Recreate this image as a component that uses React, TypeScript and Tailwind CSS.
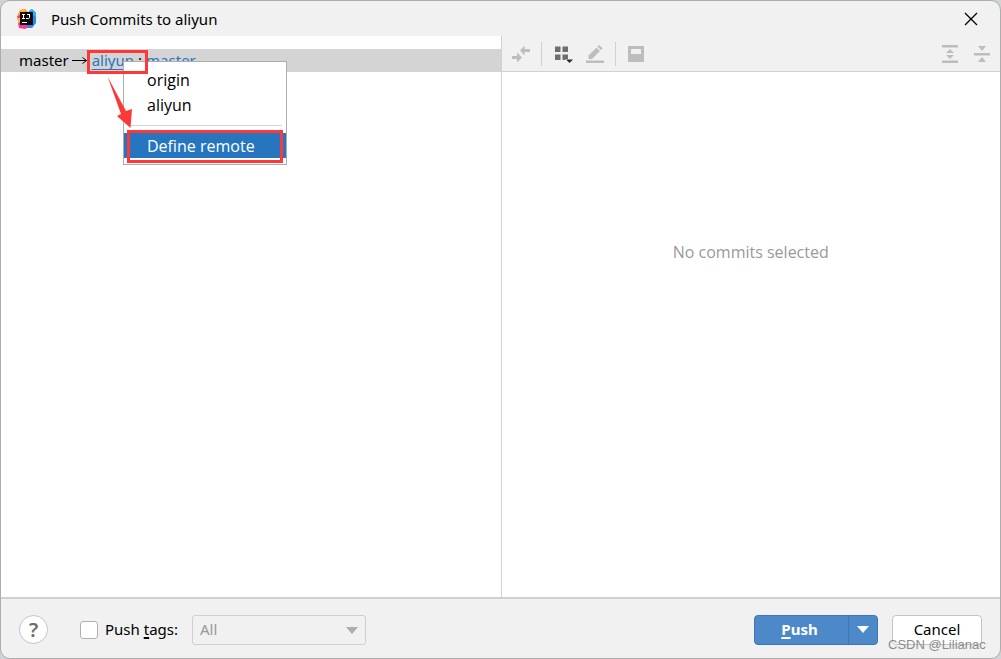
import React, { useState } from 'react';

const menuItemClass =
  'block h-[25px] w-full pl-[23px] text-left leading-[27px] whitespace-nowrap';

const AppLogo = () => (
  <svg width="20" height="20" viewBox="0 0 20 20" aria-hidden="true">
    <path d="M1 5 3 1l5-1 3 3-3 4-6 2z" fill="#ff8a3c" />
    <path d="M2 2 6 0l3 1-3 4-4 1z" fill="#fdb32a" />
    <path d="M0 7l5-2 1 6-5 1z" fill="#fb3f7c" />
    <path d="M1 9l4 0 1 4-5 0z" fill="#fdbd2c" />
    <path d="M12 2l3-2 4 4 0 10-4 5-5-2z" fill="#1f8fee" />
    <path d="M13 1l2-1 4 4 0 4-5-3z" fill="#22b7f2" />
    <path d="M1 14l4-2 6 5 1 1-4 2-6-1z" fill="#f93a8b" />
    <path d="M9 15l7 0-2 4-4 0z" fill="#5a6fe8" />
    <rect x="3" y="3" width="13" height="13" fill="#120a0d" />
    <path d="M5 5.500h3M6.500 5.500v4M5 9.500h3M10 5.500h3M12.500 5v3.500q0 1-1 1H9" stroke="#fff" fill="none" />
    <path d="M5 13.500h5" stroke="#fff" />
  </svg>
);

const CollapseArrowsIcon = () => (
  <svg width="18" height="18" viewBox="0 0 18 18" fill="#bdbdbd" aria-hidden="true">
    <path d="M8 5.500 12.500 .5v3.500H18v3h-5.500v3.500zM0 11h5V7.500l5 5-5 5V14H0z" />
  </svg>
);

const GroupIcon = () => (
  <svg width="20" height="19" viewBox="0 0 20 19" aria-hidden="true">
    <path d="M1 2.500h5.500v5.500H1zM8.500 2.500h5.500v5.500H8.500zM1 10.500h5.500v5.500H1zM8.500 10.500h5.500v5.500H8.500z" fill="#6e6e6e" />
    <path d="M11 15h9l-4.500 4z" fill="#f1f1f1" />
    <path d="M12 15.500h7l-3.500 3.500z" fill="#2b2b2b" />
  </svg>
);

const PencilIcon = () => (
  <svg width="18" height="18" viewBox="0 0 18 18" fill="#bdbdbd" aria-hidden="true">
    <path d="M2.500 14v-3.500L10.500 2.500l3.500 3.500L6 14zM11.500 1.500l1-1q.6-.6 1.200 0l2.300 2.300q.6.6 0 1.200l-1 1zM0 15.500h18V18H0z" />
  </svg>
);

const PreviewIcon = () => (
  <svg width="16" height="16" viewBox="0 0 16 16" aria-hidden="true">
    <rect width="16" height="16" fill="#bdbdbd" />
    <rect x="3" y="3" width="10" height="5" fill="#f1f1f1" />
  </svg>
);

const ExpandAllIcon = () => (
  <svg width="16" height="18" viewBox="0 0 16 18" fill="#bdbdbd" aria-hidden="true">
    <path d="M0 0h16v2.500H0zM0 15.500h16V18H0zM8 4l4 4H4zM4 10h8l-4 4z" />
  </svg>
);

const CollapseAllIcon = () => (
  <svg width="16" height="16" viewBox="0 0 16 16" fill="#bdbdbd" aria-hidden="true">
    <path d="M0 7h16v2.500H0zM4 0h8L8 5zM8 11l4 5H4z" />
  </svg>
);

const Annotations = () => (
  <svg
    className="pointer-events-none absolute top-[13px] left-[85px] z-20"
    width="200"
    height="116"
    viewBox="86 49 200 116"
    fill="none"
    aria-hidden="true"
  >
    <rect x="88.500" y="51.500" width="58" height="21" stroke="#fd3838" strokeWidth="3" />
    <rect x="128.500" y="131.500" width="153" height="30" stroke="#fd3838" strokeWidth="3" />
    <path d="M107.500 76.500 126 111l6-2-1.500 19L117 116l4-2z" fill="#fd3838" />
  </svg>
);

const App = () => {
  const [pushTags, setPushTags] = useState(false);

  return (
    <div className="min-h-screen bg-[#cfd3d6] font-['Noto_Sans','Open_Sans',sans-serif] text-[15px] text-black">
      <div className="flex min-h-screen flex-col overflow-hidden rounded-[10px] border border-[#adadad] bg-[#f1f1f1]">
        <header className="flex h-[35px] items-center pr-[22px] pl-4">
          <AppLogo />
          <h1 className="ml-[14px] flex-1 leading-5">Push Commits to aliyun</h1>
          <button type="button" aria-label="Close">
            <svg width="14" height="14" viewBox="0 0 14 14" stroke="#000" strokeWidth="1.300">
              <path d="M1 1l12 12M13 1 1 13" />
            </svg>
          </button>
        </header>

        <main className="flex flex-1 bg-white">
          <section className="relative w-1/2 pt-[13px]">
            <div className="flex h-[23px] items-center bg-[#d4d4d4] pl-[18px] whitespace-nowrap">
              <span>master</span>
              <svg className="mr-1 ml-[3px]" width="16" height="9" viewBox="0 0 16 9" fill="none" stroke="#000">
                <path d="M0 4.500h14M10.500 1.500l4 3-4 3" />
              </svg>
              <a href="#remote" className="text-[#2675bf] underline underline-offset-[3px]">
                aliyun
              </a>
              <span className="px-1">:</span>
              <a href="#branch" className="text-[#2675bf]">
                master
              </a>
            </div>

            <div className="absolute top-[25px] left-[122px] z-10 w-[164px] border border-[#adadad] bg-white pt-[5px] pb-[6px] font-['Open_Sans','Noto_Sans',sans-serif] text-base">
              <button type="button" className={menuItemClass}>
                origin
              </button>
              <button type="button" className={menuItemClass}>
                aliyun
              </button>
              <hr className="mx-1 mt-2 mb-[7px] border-[#d4d4d4]" />
              <button type="button" className={`${menuItemClass} bg-[#2675bf] text-white`}>
                Define remote
              </button>
            </div>

            <Annotations />
          </section>

          <section className="flex flex-1 flex-col border-l border-[#d1d1d1]">
            <div className="flex h-9 items-center border-b border-[#d1d1d1] bg-[#f1f1f1] px-[10px]">
              <button type="button" disabled aria-label="Show diff">
                <CollapseArrowsIcon />
              </button>
              <span className="mr-3 ml-[11px] h-6 w-px bg-[#d1d1d1]" />
              <button type="button" aria-label="Group by">
                <GroupIcon />
              </button>
              <button type="button" disabled aria-label="Edit" className="ml-3">
                <PencilIcon />
              </button>
              <span className="mr-3 ml-[11px] h-6 w-px bg-[#d1d1d1]" />
              <button type="button" disabled aria-label="Preview diff">
                <PreviewIcon />
              </button>
              <button type="button" disabled aria-label="Expand all" className="ml-auto">
                <ExpandAllIcon />
              </button>
              <button type="button" disabled aria-label="Collapse all" className="ml-4">
                <CollapseAllIcon />
              </button>
            </div>
            <p className="pt-[168px] text-center font-['Open_Sans','Noto_Sans',sans-serif] text-base text-[#999999]">
              No commits selected
            </p>
          </section>
        </main>

        <footer className="flex h-[61px] items-center border-t-2 border-[#cfcfcf] px-[18px] pt-[2px]">
          <button
            type="button"
            aria-label="Help"
            className="flex h-[29px] w-[29px] items-center justify-center rounded-full border border-[#c4c4c4] bg-white text-xl font-semibold text-[#6e6e6e]"
          >
            ?
          </button>
          <input
            id="push-tags"
            type="checkbox"
            checked={pushTags}
            onChange={(e) => setPushTags(e.target.checked)}
            className="ml-8 h-[18px] w-[18px] appearance-none rounded-[3px] border border-[#b0b0b0] bg-white checked:bg-[#4a88c7]"
          />
          <label htmlFor="push-tags" className="ml-[7px]">
            Push <span className="underline decoration-2 underline-offset-2">t</span>ags:
          </label>
          <div className="relative ml-[14px]">
            <select
              disabled
              aria-label="Tags to push"
              className="block h-[30px] w-[174px] appearance-none rounded-[3px] border border-[#cfcfcf] bg-[#f1f1f1] pl-[7px] text-[#999999] opacity-100"
            >
              <option>All</option>
            </select>
            <svg
              className="pointer-events-none absolute top-3 right-2"
              width="12"
              height="7"
              viewBox="0 0 12 7"
              fill="#adadad"
            >
              <path d="M0 0h12L6 7z" />
            </svg>
          </div>

          <div className="ml-auto flex h-[30px] rounded-[4px] border border-[#3d75b5] bg-[#4d89c9] text-white">
            <button type="button" className="w-[93px] pr-1 text-center font-bold">
              <span className="underline decoration-2 underline-offset-2">P</span>ush
            </button>
            <button
              type="button"
              aria-label="More push options"
              className="flex w-[29px] items-center justify-center border-l border-[#3d75b5]"
            >
              <svg width="12" height="7" viewBox="0 0 12 7" fill="#fff">
                <path d="M0 0h12L6 7z" />
              </svg>
            </button>
          </div>
          <div className="relative ml-[14px]">
            <button
              type="button"
              className="block h-[30px] w-[90px] rounded-[4px] border border-[#c4c4c4] bg-white"
            >
              Cancel
            </button>
            <span className="pointer-events-none absolute top-5 -left-1 font-['Liberation_Sans',sans-serif] text-[13px] leading-5 whitespace-nowrap text-[#8c8c8c]">
              CSDN @Lilianac
            </span>
          </div>
        </footer>
      </div>
    </div>
  );
};

export default App;
